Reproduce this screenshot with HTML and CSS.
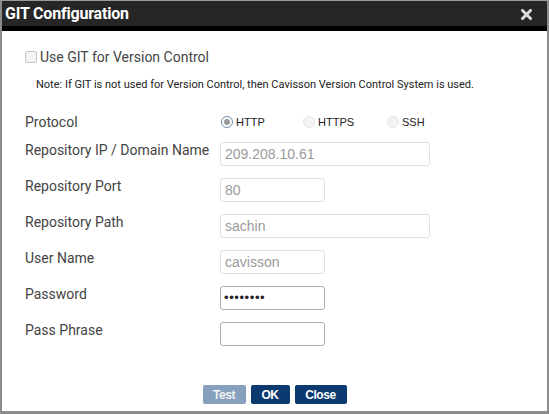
FILE: index.html
```html
<!DOCTYPE html>
<html>
<head>
<meta charset="utf-8">
<link rel="stylesheet" href="styles.css">
</head>
<body>
<div class="dialog">
  <div class="titlebar">
    <span class="title">GIT Configuration</span>
    <svg class="close" width="11" height="11" viewBox="0 0 11 11"><path d="M1.5 1.5 L9.5 9.5 M9.5 1.5 L1.5 9.5" stroke="#dcdcdc" stroke-width="3" stroke-linecap="square"/></svg>
  </div>
  <div class="strip"></div>
  <div class="content">
    <div class="check-row"><span class="checkbox"></span><span class="check-label">Use GIT for Version Control</span></div>
    <div class="note">Note: If GIT is not used for Version Control, then Cavisson Version Control System is used.</div>
    <div class="form">
      <div class="label proto-label">Protocol</div>
      <div class="radios">
        <span class="radio-group"><span class="radio checked"></span><span class="radio-text">HTTP</span></span>
        <span class="radio-group"><span class="radio"></span><span class="radio-text">HTTPS</span></span>
        <span class="radio-group"><span class="radio"></span><span class="radio-text">SSH</span></span>
      </div>
      <div class="label">Repository IP / Domain Name</div>
      <div class="field wide">209.208.10.61</div>
      <div class="label">Repository Port</div>
      <div class="field">80</div>
      <div class="label">Repository Path</div>
      <div class="field wide">sachin</div>
      <div class="label">User Name</div>
      <div class="field">cavisson</div>
      <div class="label">Password</div>
      <div class="field active dots">••••••••</div>
      <div class="label">Pass Phrase</div>
      <div class="field active"></div>
    </div>
    <div class="footer">
      <button class="btn disabled">Test</button>
      <button class="btn ok">OK</button>
      <button class="btn close-btn">Close</button>
    </div>
  </div>
</div>
</body>
</html>
```
FILE: styles.css
```css
* { box-sizing: border-box; }
html, body { margin: 0; padding: 0; background: #fff; }
.dialog {
  width: 549px;
  height: 414px;
  border-left: 2px solid #8c8c8c;
  border-right: 2px solid #8c8c8c;
  border-top: 1px solid #9a9a9a;
  border-bottom: 3px solid #8c8c8c;
  display: flex;
  flex-direction: column;
  font-family: Roboto, "Liberation Sans", sans-serif;
  background: #fff;
}
.titlebar {
  height: 25px;
  background: #262626;
  display: flex;
  align-items: center;
  justify-content: space-between;
  padding: 0 15px 0 3px;
}
.title {
  color: #fff;
  font-weight: bold;
  font-size: 16px;
  letter-spacing: -0.2px;
}
.close { display: block; margin-top: 1px; }
.strip { height: 5px; background: #000; }
.content {
  flex: 1;
  display: flex;
  flex-direction: column;
  padding: 18px 0 0 23px;
}
.check-row {
  display: flex;
  align-items: center;
  height: 16px;
}
.checkbox {
  width: 12px;
  height: 12px;
  border: 1px solid #c4c4c4;
  border-radius: 2px;
  background: #f4f4f4;
  margin-right: 3px;
}
.check-label { font-size: 14px; color: #444; }
.note {
  font-size: 11px;
  color: #222;
  margin: 13px 0 0 11px;
  line-height: 14px;
}
.form {
  display: grid;
  grid-template-columns: 195px 1fr;
  row-gap: 12px;
  margin-top: 22px;
  align-items: start;
}
.label {
  font-size: 14px;
  line-height: 16px;
  color: #444;
}
.radios {
  display: flex;
  align-items: center;
  height: 16px;
  padding-left: 1px;
}
.radio-group {
  display: flex;
  align-items: center;
  width: 82px;
}
.radio-group:nth-child(2) { width: 84px; }
.radio {
  width: 12px;
  height: 12px;
  border-radius: 50%;
  border: 1px solid #e6e6e6;
  background: #f3f3f3;
  margin-right: 3px;
  position: relative;
}
.radio.checked {
  border: 1px solid #6d8fb0;
  background: #fff;
}
.radio.checked::after {
  content: "";
  position: absolute;
  left: 2px;
  top: 2px;
  width: 6px;
  height: 6px;
  border-radius: 50%;
  background: #9a9a9a;
}
.radio-text {
  font-family: "Liberation Sans", Arial, sans-serif;
  font-size: 11px;
  color: #222;
}
.field {
  width: 105px;
  height: 24px;
  border: 1px solid #e0e0e0;
  border-radius: 3px;
  font-family: "Liberation Sans", Arial, sans-serif;
  font-size: 14px;
  color: #9a9a9a;
  padding: 0 0 0 4px;
  line-height: 22px;
}
.field.wide { width: 210px; }
.field.active { border-color: #b0b0b0; }
.field.dots { color: #222; font-size: 13px; letter-spacing: 0.6px; padding-left: 3px; }
.footer {
  margin-top: auto;
  display: flex;
  justify-content: center;
  gap: 5px;
  padding: 0 23px 7px 0;
}
.btn {
  height: 19px;
  border: none;
  border-radius: 2px;
  font-family: "Liberation Sans", Arial, sans-serif;
  font-weight: bold;
  font-size: 12px;
  color: #fff;
  padding: 0;
  letter-spacing: -0.4px;
}
.btn.disabled { width: 43px; background: #86a0bd; color: #f0f3f7; }
.btn.ok { width: 39px; background: #0b3a70; }
.btn.close-btn { width: 52px; background: #0b3a70; }
```
